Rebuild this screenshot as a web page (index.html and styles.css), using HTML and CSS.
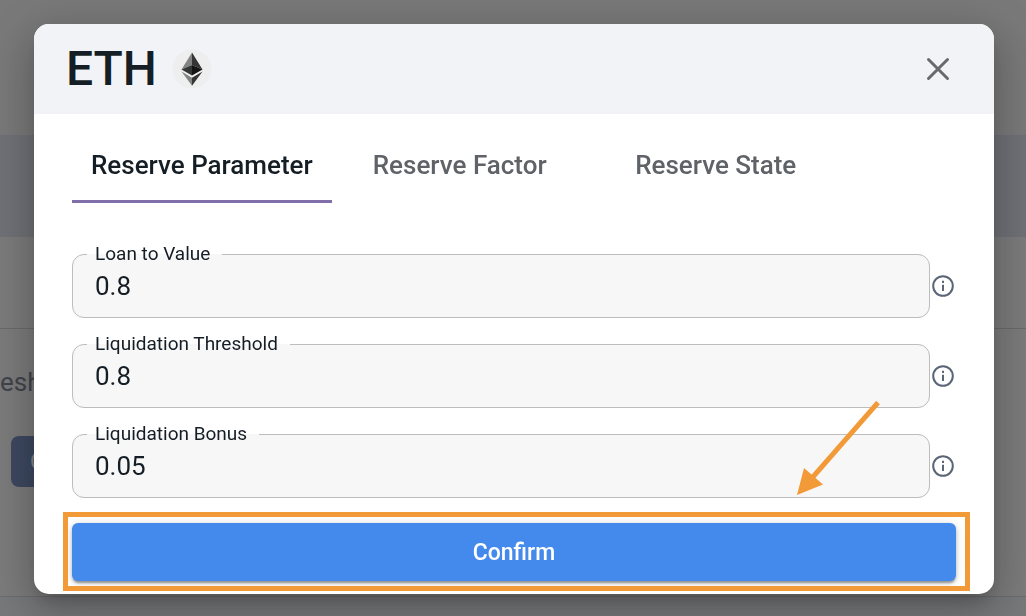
FILE: index.html
```
<!DOCTYPE html>
<html lang="en">
<head>
<meta charset="utf-8">
<meta name="viewport" content="width=device-width, initial-scale=1">
<title>ETH reserve settings</title>
<link rel="stylesheet" href="styles.css">
</head>
<body>
<main class="page" aria-hidden="true">
  <div class="page-top"></div>
  <div class="page-band"></div>
  <div class="page-row"></div>
  <div class="page-content">
    <div class="page-label">esh</div>
    <div class="page-action">C</div>
  </div>
</main>

<div class="overlay">
  <section class="dialog" role="dialog" aria-modal="true" aria-labelledby="dialog-title">
    <header class="dialog-header">
      <h1 class="dialog-title" id="dialog-title">ETH</h1>
      <svg class="token" viewBox="0 0 40 40" aria-hidden="true">
        <circle cx="20" cy="20" r="19.500" fill="#eeeeef"/>
        <path d="M20 3.500 9.500 20.500 20 16Z" fill="#828384"/>
        <path d="M20 3.500 30.500 20.500 20 16Z" fill="#343535"/>
        <path d="M9.500 20.500 20 16V26.500Z" fill="#343535"/>
        <path d="M30.500 20.500 20 16V26.500Z" fill="#141414"/>
        <path d="M9.500 22.500 20 28.700V36.800Z" fill="#828384"/>
        <path d="M30.500 22.500 20 28.700V36.800Z" fill="#343535"/>
      </svg>
      <button class="close" type="button" aria-label="Close">
        <svg class="close-icon" viewBox="0 0 24 24" aria-hidden="true"><path d="M2.500 2.500 21.500 21.500M21.500 2.500 2.500 21.500"/></svg>
      </button>
    </header>

    <div class="dialog-body">
      <div class="tabs" role="tablist">
        <button class="tab tab-active" type="button" role="tab" aria-selected="true">Reserve Parameter</button>
        <button class="tab" type="button" role="tab" aria-selected="false">Reserve Factor</button>
        <button class="tab" type="button" role="tab" aria-selected="false">Reserve State</button>
      </div>

      <form class="form">
        <div class="row">
          <fieldset class="field">
            <legend class="legend"><label for="ltv">Loan to Value</label></legend>
            <input class="input" id="ltv" type="text" value="0.8">
          </fieldset>
          <svg class="info" viewBox="0 0 22 22" aria-hidden="true"><circle cx="11" cy="11" r="9.800"/><path d="M11 9.800V16M11 5.800V8"/></svg>
        </div>
        <div class="row">
          <fieldset class="field">
            <legend class="legend"><label for="threshold">Liquidation Threshold</label></legend>
            <input class="input" id="threshold" type="text" value="0.8">
          </fieldset>
          <svg class="info" viewBox="0 0 22 22" aria-hidden="true"><circle cx="11" cy="11" r="9.800"/><path d="M11 9.800V16M11 5.800V8"/></svg>
        </div>
        <div class="row">
          <fieldset class="field">
            <legend class="legend"><label for="bonus">Liquidation Bonus</label></legend>
            <input class="input" id="bonus" type="text" value="0.05">
          </fieldset>
          <svg class="info" viewBox="0 0 22 22" aria-hidden="true"><circle cx="11" cy="11" r="9.800"/><path d="M11 9.800V16M11 5.800V8"/></svg>
        </div>
        <div class="actions">
          <button class="confirm" type="button">Confirm</button>
          <span class="highlight"></span>
          <svg class="arrow" viewBox="0 0 84 94" aria-hidden="true">
            <path d="M81 1.500 15 77" fill="none" stroke="#f29a38" stroke-width="5"/>
            <path d="M0 94 7 67 26 83.500Z" fill="#f29a38"/>
          </svg>
        </div>
      </form>
    </div>
  </section>
</div>
</body>
</html>
```
FILE: styles.css
```
* {
  box-sizing: border-box;
}

body {
  margin: 0;
  font-family: Roboto, "Liberation Sans", sans-serif;
  color: #151d25;
  background: #77787a;
}

button,
input {
  font-family: inherit;
  color: inherit;
}

/* Dimmed page behind the dialog */
.page {
  display: flex;
  flex-direction: column;
  min-height: 100vh;
  overflow: hidden;
}

.page-top {
  height: 135px;
  background: #79797a;
}

.page-band {
  height: 102px;
  background: #6f7176;
}

.page-row {
  height: 92px;
  background: #7b7b7b;
  border-bottom: 1px solid #6a6a6a;
}

.page-content {
  height: 268px;
  padding-top: 35px;
  background: #7b7b7b;
  border-bottom: 1px solid #6c6c6c;
}

.page-label {
  font-size: 26px;
  line-height: 36px;
  color: #3f434a;
}

.page-action {
  width: 120px;
  height: 51px;
  margin: 36px 0 0 11px;
  padding-left: 19px;
  border-radius: 8px;
  background: #3d4860;
  color: #85888f;
  font-size: 22px;
  line-height: 51px;
}

.overlay {
  position: fixed;
  inset: 0;
  padding: 24px 32px 22px 34px;
}

.dialog {
  overflow: hidden;
  height: 100%;
  border-radius: 15px;
  background: #fff;
  box-shadow: 0 10px 16px -6px rgba(0, 0, 0, 0.2), 0 16px 40px 4px rgba(0, 0, 0, 0.18), 0 6px 50px 8px rgba(0, 0, 0, 0.08);
}

.dialog-header {
  display: flex;
  align-items: center;
  height: 90px;
  padding: 0 44px 0 32px;
  background: #f2f3f7;
}

.dialog-title {
  margin: 0;
  font-size: 48px;
  font-weight: 500;
  line-height: 56px;
}

.token {
  width: 40px;
  height: 40px;
  margin-left: 15px;
}

.close {
  display: flex;
  margin-left: auto;
  padding: 0;
  border: 0;
  background: none;
}

.close-icon {
  width: 24px;
  height: 24px;
  fill: none;
  stroke: #67696c;
  stroke-width: 3;
  stroke-linecap: round;
}

.dialog-body {
  padding: 14px 38px 0;
}

.tabs {
  display: flex;
}

.tab {
  min-width: 256px;
  height: 75px;
  padding: 2px 19px 0;
  border: 0;
  border-bottom: 3px solid transparent;
  background: none;
  color: #5f6368;
  font-size: 26px;
  font-weight: 500;
  line-height: 32px;
}

.tab-active {
  border-bottom-color: #806fa9;
  color: #151d25;
}

.form {
  display: flex;
  flex-direction: column;
  gap: 15px;
  padding-top: 40px;
}

.row {
  display: flex;
  align-items: flex-end;
}

.field {
  flex: 1;
  min-width: 0;
  margin: 0;
  padding: 0 14px;
  border: 1px solid #bdbdbd;
  border-radius: 12px;
  background: #f7f7f7;
}

.legend {
  padding: 0 12px 0 8px;
  font-size: 19px;
  line-height: 22px;
}

.input {
  display: block;
  width: 100%;
  height: 52px;
  padding: 0 8px 10px;
  border: 0;
  outline: 0;
  background: none;
  font-size: 26px;
}

.info {
  width: 22px;
  height: 22px;
  margin: 0 2px 21px;
  fill: none;
  stroke: #5a6577;
  stroke-width: 2;
}

.actions {
  position: relative;
  padding-top: 10px;
}

.confirm {
  display: block;
  width: 100%;
  height: 58px;
  border: 0;
  border-radius: 6px;
  background: #448aec;
  box-shadow: 0 3px 2px -1px rgba(0, 0, 0, 0.25), 0 2px 4px rgba(0, 0, 0, 0.2), 0 1px 8px rgba(0, 0, 0, 0.14);
  color: #fff;
  font-size: 23px;
  font-weight: 500;
}

/* Callout drawn over the confirm button */
.highlight {
  position: absolute;
  inset: -1px -14px -10px -9px;
  border: 5px solid #f29a38;
  pointer-events: none;
}

.arrow {
  position: absolute;
  right: 75px;
  bottom: 86px;
  width: 84px;
  height: 94px;
  pointer-events: none;
}
```
